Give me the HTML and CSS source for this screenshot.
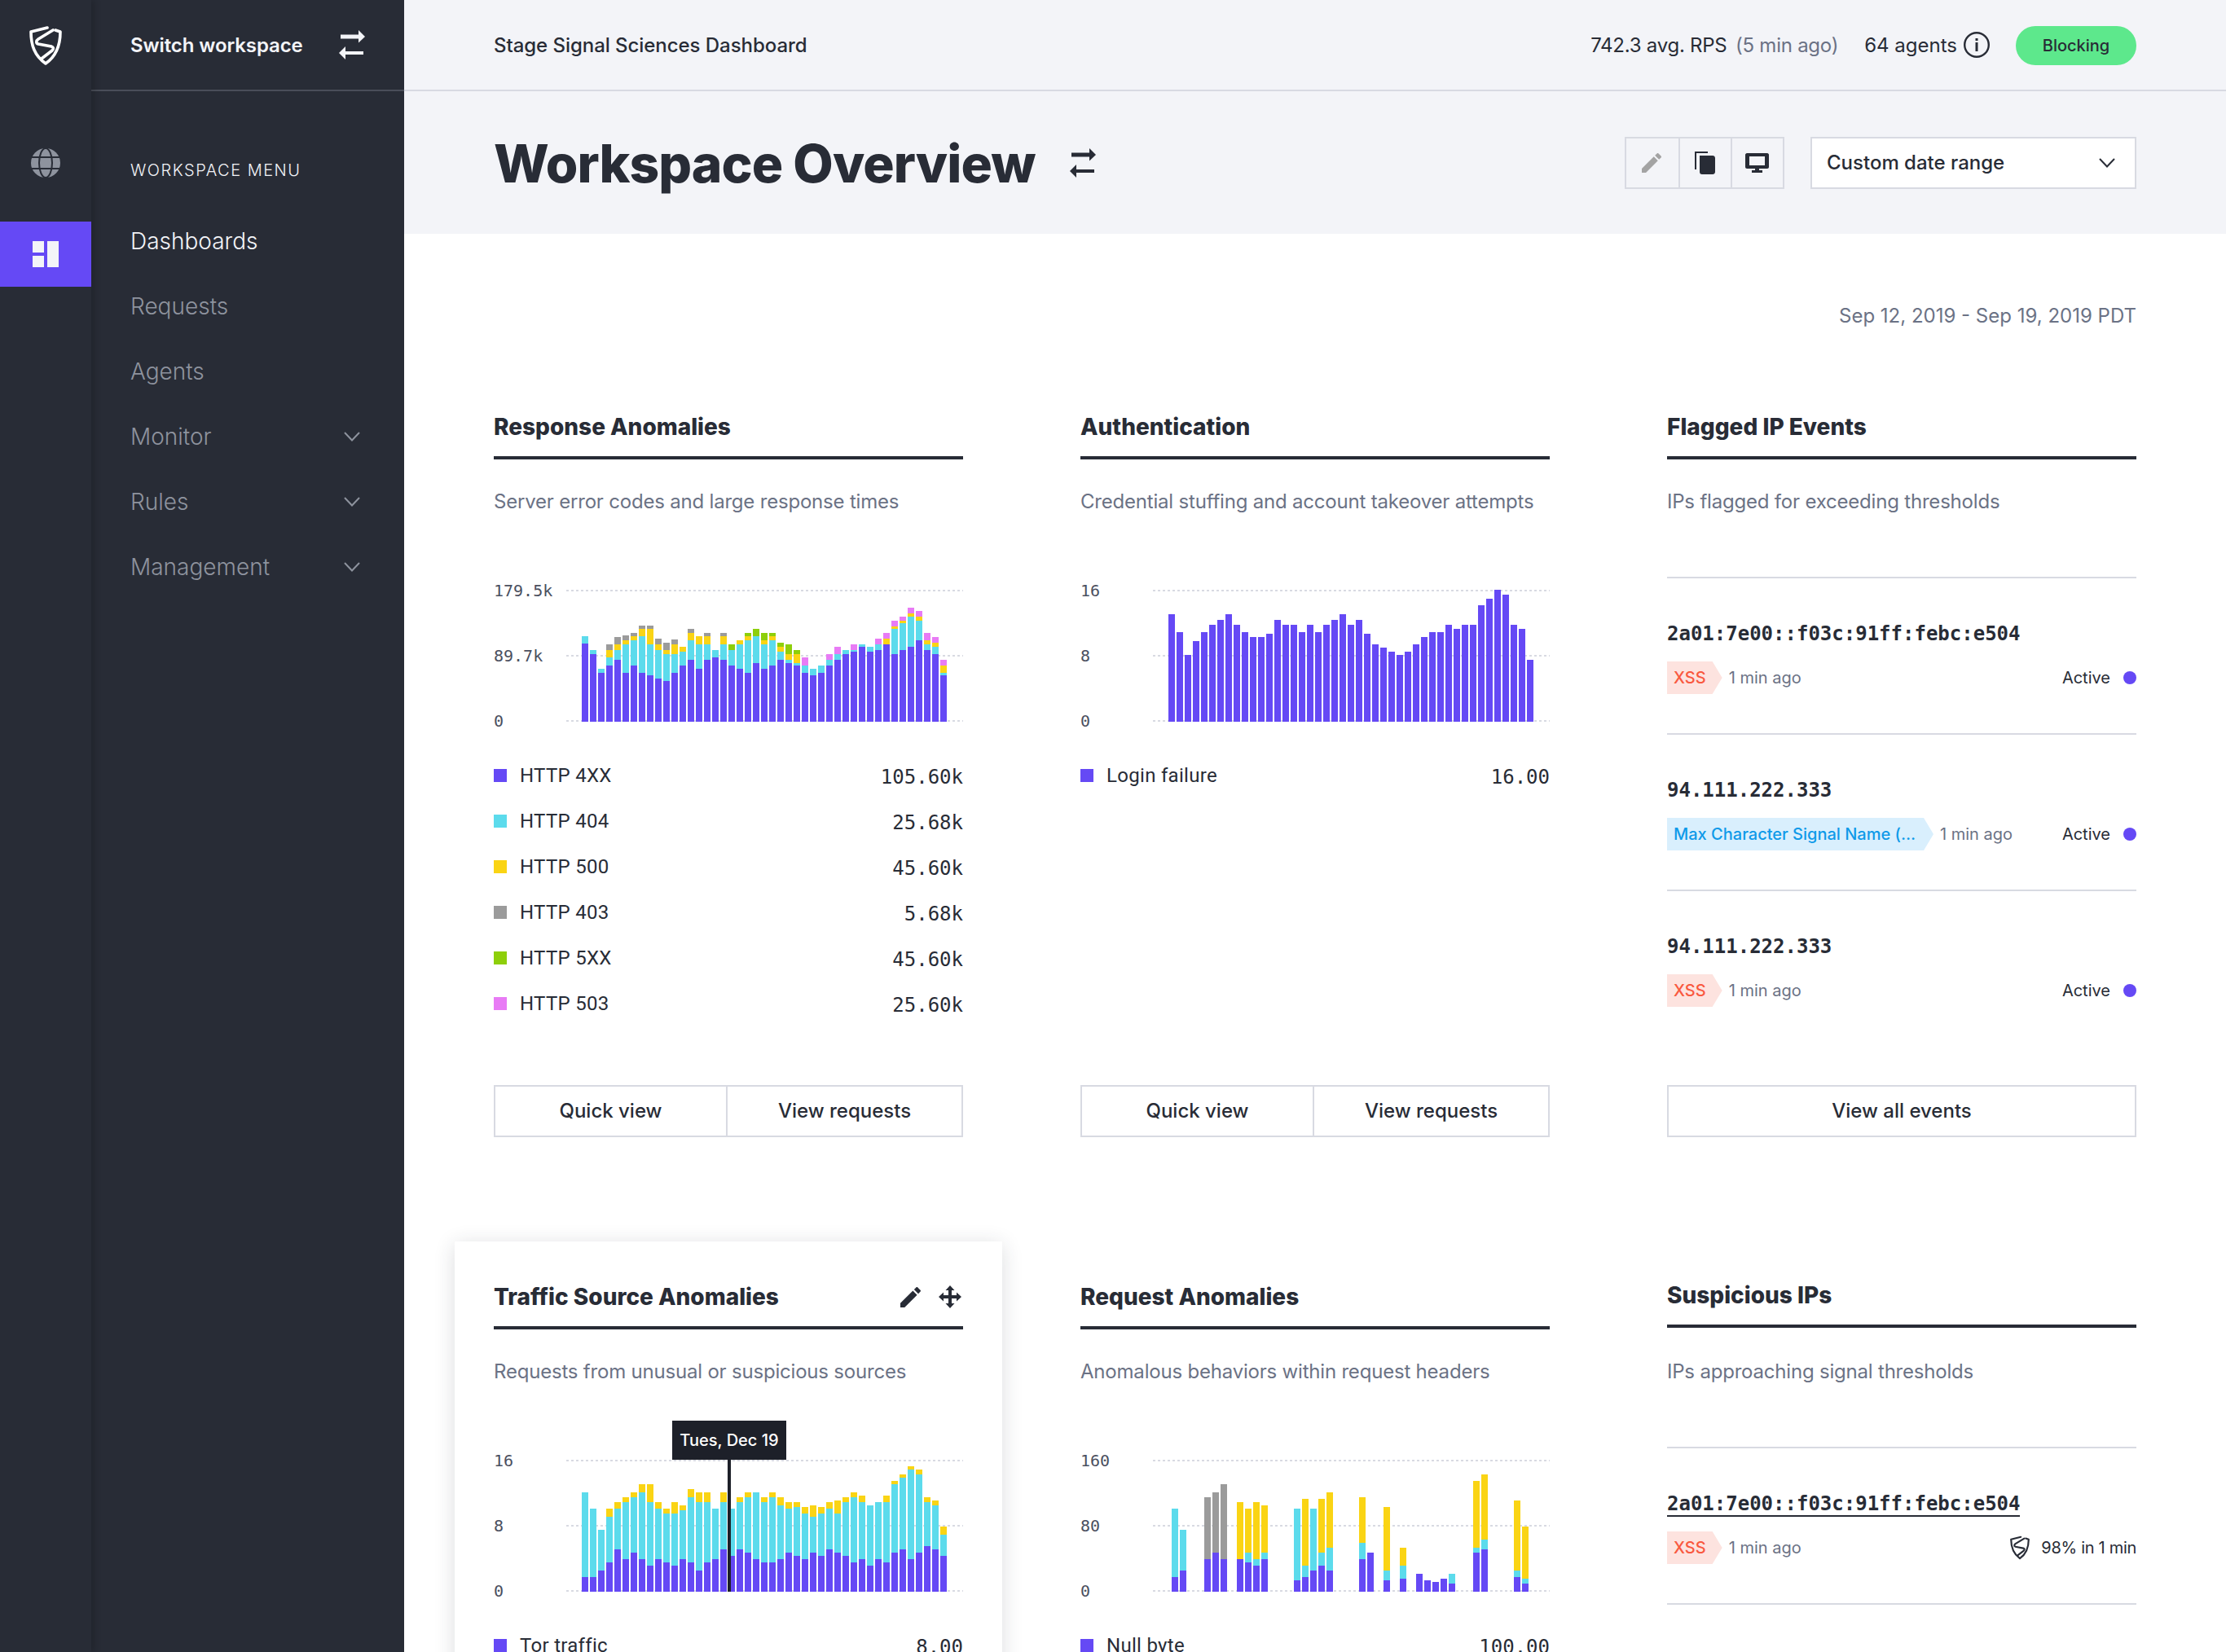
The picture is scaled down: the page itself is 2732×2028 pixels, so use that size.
FILE: index.html
```html
<!DOCTYPE html>
<html lang="en">
<head>
  <meta charset="UTF-8">
  <title>Workspace Overview - Signal Sciences</title>
  <link rel="stylesheet" href="styles.css">
</head>
<body>

<svg class="defs" width="0" height="0">
  <symbol id="i-logo" viewBox="0 0 40 48">
    <g fill="none" stroke="currentColor" stroke-width="3.600" stroke-linejoin="round" stroke-linecap="round">
      <path d="M22 2 L2 7 C2 23 6 36 20 46 C33 37 38 23 38 7 L32 5"/>
      <path d="M29 5 L11 16 C8 18 8 21 11 22 L27 25 C30 26 30 28 28 30 L15 40"/>
    </g>
  </symbol>
  <symbol id="i-swap" viewBox="0 0 32 36">
    <path fill="currentColor" d="M2 5.500h22V0l8 8-8 7.500v-5H2zM30 26H8v-6l-8 8 8 8v-6h22z"/>
  </symbol>
  <symbol id="i-pencil" viewBox="3 3 18 18">
    <path fill="currentColor" d="M3 17.250V21h3.750L17.810 9.940l-3.750-3.750L3 17.250zM20.710 7.040c.39-.39.39-1.020 0-1.410l-2.340-2.340c-.39-.39-1.020-.39-1.410 0l-1.830 1.830 3.750 3.750 1.830-1.830z"/>
  </symbol>
  <symbol id="i-chevron" viewBox="0 0 20 12">
    <path fill="none" stroke="currentColor" stroke-width="2" d="M1 1l9 9.500L19 1"/>
  </symbol>
</svg>

<div class="app">

  <nav class="rail">
    <div class="rail-logo"><svg class="logo"><use href="#i-logo"/></svg></div>
    <div class="rail-item">
      <svg class="globe" viewBox="0 0 36 36">
        <circle cx="18" cy="18" r="18" fill="#8e939e"/>
        <g fill="none" stroke="#282c36" stroke-width="2">
          <ellipse cx="18" cy="18" rx="8" ry="18"/>
          <path d="M0 11h36M0 25h36"/>
        </g>
      </svg>
    </div>
    <div class="rail-item active">
      <svg class="grid-icon" viewBox="0 0 32 32">
        <path fill="#f3f4f8" d="M0 0h14v14H0zM0 18h14v14H0zM18 0h14v32H18z"/>
      </svg>
    </div>
  </nav>

  <aside class="sidebar">
    <div class="switcher">
      <span>Switch workspace</span>
      <svg class="swap"><use href="#i-swap"/></svg>
    </div>
    <div class="menu-title">WORKSPACE MENU</div>
    <a class="menu-item current">Dashboards</a>
    <a class="menu-item">Requests</a>
    <a class="menu-item">Agents</a>
    <a class="menu-item">Monitor <svg class="chev"><use href="#i-chevron"/></svg></a>
    <a class="menu-item">Rules <svg class="chev"><use href="#i-chevron"/></svg></a>
    <a class="menu-item">Management <svg class="chev"><use href="#i-chevron"/></svg></a>
  </aside>

  <main class="main">
    <div class="topbar">
      <div class="crumb">Stage Signal Sciences Dashboard</div>
      <div class="stats">
        <div class="rps">742.3 avg. RPS <span class="muted">(5 min ago)</span></div>
        <div class="agents">64 agents
          <svg class="info" viewBox="0 0 32 32">
            <circle cx="16" cy="16" r="14.800" fill="none" stroke="currentColor" stroke-width="2.400"/>
            <path fill="currentColor" d="M14.500 13h3v11h-3zM14.500 8h3v3h-3z"/>
          </svg>
        </div>
        <div class="pill">Blocking</div>
      </div>
    </div>

    <header class="pagehead">
      <div class="pagetitle">
        <h1>Workspace Overview</h1>
        <svg class="swap"><use href="#i-swap"/></svg>
      </div>
      <div class="tools">
        <div class="toolgroup">
          <div class="tool"><svg class="tool-pencil"><use href="#i-pencil"/></svg></div>
          <div class="tool">
            <svg class="tool-copy" viewBox="0 0 25 28"><path fill="currentColor" d="M0 0h16v2H2v20H0zM6 5h16c1.500 0 3 1 3 3v17c0 2-1.500 3-3 3H9c-2 0-3-1-3-3z"/></svg>
          </div>
          <div class="tool">
            <svg class="tool-screen" viewBox="0 0 29 24"><path fill="currentColor" fill-rule="evenodd" d="M2 0h25c1 0 2 1 2 2v15c0 1-1 2-2 2H17v2h4v3H8v-3h4v-2H2c-1 0-2-1-2-2V2C0 1 1 0 2 0zM5 4v11h19V4z"/></svg>
          </div>
        </div>
        <div class="select">
          <span>Custom date range</span>
          <svg class="chev"><use href="#i-chevron"/></svg>
        </div>
      </div>
    </header>

    <section class="content">
      <div class="daterange">Sep 12, 2019 - Sep 19, 2019 PDT</div>

      <div class="cards">

        <article class="card">
          <h3 class="card-head">Response Anomalies</h3>
          <p class="card-sub">Server error codes and large response times</p>
          <div class="chart" data-chart="response" data-labels="179.5k,89.7k,0"></div>
          <ul class="legend">
            <li><i class="sw p"></i><span>HTTP 4XX</span><b>105.60k</b></li>
            <li><i class="sw c"></i><span>HTTP 404</span><b>25.68k</b></li>
            <li><i class="sw y"></i><span>HTTP 500</span><b>45.60k</b></li>
            <li><i class="sw g"></i><span>HTTP 403</span><b>5.68k</b></li>
            <li><i class="sw l"></i><span>HTTP 5XX</span><b>45.60k</b></li>
            <li><i class="sw m"></i><span>HTTP 503</span><b>25.60k</b></li>
          </ul>
          <div class="actions"><button>Quick view</button><button>View requests</button></div>
        </article>

        <article class="card">
          <h3 class="card-head">Authentication</h3>
          <p class="card-sub">Credential stuffing and account takeover attempts</p>
          <div class="chart" data-chart="auth" data-labels="16,8,0"></div>
          <ul class="legend">
            <li><i class="sw p"></i><span>Login failure</span><b>16.00</b></li>
          </ul>
          <div class="actions"><button>Quick view</button><button>View requests</button></div>
        </article>

        <article class="card">
          <h3 class="card-head">Flagged IP Events</h3>
          <p class="card-sub">IPs flagged for exceeding thresholds</p>
          <div class="events">
            <div class="event">
              <div class="ip">2a01:7e00::f03c:91ff:febc:e504</div>
              <div class="event-meta">
                <span class="tag red">XSS</span><span class="ago">1 min ago</span>
                <span class="status">Active <i class="dot"></i></span>
              </div>
            </div>
            <div class="event">
              <div class="ip">94.111.222.333</div>
              <div class="event-meta">
                <span class="tag blue">Max Character Signal Name (...</span><span class="ago">1 min ago</span>
                <span class="status">Active <i class="dot"></i></span>
              </div>
            </div>
            <div class="event">
              <div class="ip">94.111.222.333</div>
              <div class="event-meta">
                <span class="tag red">XSS</span><span class="ago">1 min ago</span>
                <span class="status">Active <i class="dot"></i></span>
              </div>
            </div>
          </div>
          <div class="actions"><button>View all events</button></div>
        </article>

        <article class="card raised">
          <h3 class="card-head">Traffic Source Anomalies
            <span class="head-tools">
              <svg class="head-pencil"><use href="#i-pencil"/></svg>
              <svg class="head-move" viewBox="0 0 28 28"><path fill="currentColor" d="M14 0l5.500 6H16v6h6V8.500l6 5.500-6 5.500V16h-6v6h3.500L14 28l-5.500-6H12v-6H6v3.500L0 14l6-5.500V12h6V6H8.500z"/></svg>
            </span>
          </h3>
          <p class="card-sub">Requests from unusual or suspicious sources</p>
          <div class="chart" data-chart="traffic" data-labels="16,8,0">
            <div class="tip">Tues, Dec 19</div>
            <div class="tip-line"></div>
          </div>
          <ul class="legend">
            <li><i class="sw p"></i><span>Tor traffic</span><b>8.00</b></li>
          </ul>
        </article>

        <article class="card">
          <h3 class="card-head">Request Anomalies</h3>
          <p class="card-sub">Anomalous behaviors within request headers</p>
          <div class="chart shifted" data-chart="request" data-labels="160,80,0"></div>
          <ul class="legend">
            <li><i class="sw p"></i><span>Null byte</span><b>100.00</b></li>
          </ul>
        </article>

        <article class="card lifted">
          <h3 class="card-head">Suspicious IPs</h3>
          <p class="card-sub">IPs approaching signal thresholds</p>
          <div class="events">
            <div class="event">
              <div class="ip"><u>2a01:7e00::f03c:91ff:febc:e504</u></div>
              <div class="event-meta">
                <span class="tag red">XSS</span><span class="ago">1 min ago</span>
                <span class="status score"><svg class="shield"><use href="#i-logo"/></svg> 98% in 1 min</span>
              </div>
            </div>
            <div class="event"></div>
          </div>
        </article>

      </div>
    </section>
  </main>
</div>

<script>
// p purple, c cyan, y yellow, g gray, l lime, m magenta
// each bar lists where every segment ends, measured from the top of the chart image
const CHARTS = {
  response: { base: 588, bars: [
    "p300 c272","p338 c324","p407 c392","p381 c350 y324 g302","p360 c324 y303 g277","p407 c303 y288 g271",
    "p381 c288 y273 g262","p407 c272 y246 g235","p417 c303 y246 g235","p428 c324 y303 g282","p438 c339 y324 g297",
    "p407 c339 y303 g286","p381 c329 y313","p360 c288 y262 g246","p392 c303 y273","p360 c303 y273 g262","p350 c324",
    "p360 c303 y273 g262","p381 c324 l303","p392 c303 y288","p407 c288 y273 l262","p371 c273 l246","p392 c303 y288 l262",
    "p381 c288 y273 l262","p360 c329 y313 l298","p371 c360 y339 l303","p381 c371 y339 l324","p407 c381 m350","p417 c392",
    "p407 c381","p381 c360 m339","p360 c339 m313","p339 c324","p329 c324 m303","p313 c303","p329 c313","p324 c303 m282",
    "p303 y282 m262","p339 c246 y236 m215","p324 c226 y215 m200","p313 c200 y189 m168","p288 c215 y200 m179",
    "p324 c303 y288 m262","p339 c313 y298 m277","p417 c407 y381 m360"
  ]},
  auth: { base: 588, bars: [
    "p192","p258","p342","p290","p258","p232","p212","p192","p232","p258","p277","p277","p264","p212","p232","p232",
    "p258","p232","p258","p232","p212","p192","p232","p212","p264","p303","p316","p329","p342","p329","p303","p277",
    "p258","p258","p232","p245","p232","p232","p160","p134","p102","p121","p232","p245","p361"
  ]},
  traffic: { base: 1302, bars: [
    "p1248 c936","p1248 c996","p1224 c1074","p1194 c1026 y996","p1146 c996 y972","p1182 c972 y954","p1158 c954 y936",
    "p1182 c936 y906","p1206 c972 y906","p1182 c996 y972","p1194 c1014 y996","p1206 c1014 y972","p1182 c1002 y984",
    "p1194 c954 y924","p1224 c972 y936","p1194 c972 y936","p1182 c996","p1146 c972 y936","p1170 c996","p1146 c972 y954",
    "p1158 c954 y936","p1182 c936","p1194 c972 y954","p1194 c954 y936","p1182 c984 y954","p1158 c996 y972",
    "p1170 c990 y972","p1182 c1014 y990","p1158 c1026 y984","p1170 c1014 y990","p1146 c996 y972","p1158 c1014 y966",
    "p1170 c972 y954","p1194 c954 y936","p1182 c972 y948","p1206 c984","p1182 c972","p1194 c972 y948","p1158 c906 y894",
    "p1146 c882 y870","p1182 c852 y840","p1158 c870 y852","p1134 c972 y954","p1146 c984 y966","p1170 c1092 y1062"
  ]},
  request: { base: 642, bars: [
    "p588 c336","p564 c414","","","p522 g294","p498 g276","p522 g246","","p522 y312","p534 c498 y336","p546 c522 y312",
    "p522 c498 y324","","","","p600 c336","p588 c546 y300","p564 c336","p546 c498 y300","p564 c480 y276","","","",
    "p522 c462 y294","p498","","p600 c564 y330","","p594 c546 y480","","p576","p600","p606","p594","p612 c576","","",
    "p498 c480 y234","p486 c450 y210","","","","p588 c564 y306","p612 c594 y402"
  ]}
};

function dibujarBarra(texto, base) {
  const barra = document.createElement("div");
  barra.className = "bar";
  let anterior = base;
  texto.split(" ").filter(Boolean).forEach(function (parte) {
    const fin = Number(parte.slice(1));
    const seg = document.createElement("i");
    seg.className = parte[0];
    seg.style.height = (anterior - fin) / 3 + "px";
    barra.appendChild(seg);
    anterior = fin;
  });
  return barra;
}

document.querySelectorAll(".chart").forEach(function (chart) {
  const datos = CHARTS[chart.dataset.chart];
  const filas = chart.dataset.labels.split(",").map(function (etiqueta) {
    const fila = document.createElement("div");
    fila.className = "gridrow";
    fila.innerHTML = "<span>" + etiqueta + "</span><hr>";
    return fila;
  });
  chart.prepend(...filas);

  const barras = document.createElement("div");
  barras.className = "bars";
  datos.bars.forEach(function (texto) {
    barras.appendChild(dibujarBarra(texto, datos.base));
  });
  chart.insertBefore(barras, filas[2].nextSibling);
});
</script>

</body>
</html>
```

FILE: styles.css
```css
* { box-sizing: border-box; }
html, body { margin: 0; height: 100%; }
body {
  font-family: Inter, "Noto Sans", sans-serif;
  color: #282c36;
  background: #fff;
  overflow: hidden;
}
.defs { position: absolute; }
h1, h3, p, ul { margin: 0; padding: 0; }
.app { display: flex; height: 2028px; overflow: hidden; }

/* icon rail */
.rail {
  width: 112px;
  flex: none;
  background: #282c36;
  color: #fff;
  box-shadow: 4px 0 8px rgba(0, 0, 0, .18);
  position: relative;
  z-index: 1;
  display: flex;
  flex-direction: column;
  gap: 32px;
}
.rail-logo { height: 128px; padding-top: 32px; display: flex; justify-content: center; }
.logo { width: 40px; height: 48px; }
.rail-item { height: 80px; display: flex; align-items: center; justify-content: center; }
.rail-item.active { background: #6549f5; }
.globe { width: 36px; height: 36px; }
.grid-icon { width: 32px; height: 32px; }

/* sidebar */
.sidebar { width: 384px; flex: none; background: #282c36; color: #8e939e; }
.switcher {
  height: 112px;
  padding: 0 48px 0 48px;
  border-bottom: 2px solid #4a4e59;
  display: flex;
  align-items: center;
  justify-content: space-between;
  color: #f3f4f8;
  font-size: 24px;
  font-weight: 600;
  letter-spacing: -.1px;
}
.swap { width: 32px; height: 36px; flex: none; }
.menu-title {
  margin: 83px 0 33px 48px;
  height: 28px;
  line-height: 28px;
  font-size: 20px;
  font-weight: 300;
  letter-spacing: 1.500px;
  color: #f3f4f8;
}
.menu-item {
  height: 80px;
  padding: 0 54px 0 48px;
  display: flex;
  align-items: center;
  justify-content: space-between;
  font-size: 28px;
  font-weight: 300;
}
.menu-item.current { color: #f3f4f8; }
.chev { width: 20px; height: 12px; flex: none; }

/* main column */
.main { flex: 1; min-width: 0; }
.topbar {
  height: 112px;
  padding: 0 110px;
  background: #f3f4f8;
  border-bottom: 2px solid #d8dae2;
  display: flex;
  align-items: center;
  justify-content: space-between;
  font-size: 24px;
}
.crumb { font-weight: 500; letter-spacing: -.05px; }
.stats { display: flex; align-items: center; }
.rps { margin-right: 32px; letter-spacing: -.25px; }
.muted { color: #6b7285; margin-left: 4px; }
.agents { display: flex; align-items: center; gap: 8px; margin-right: 32px; }
.info { width: 32px; height: 32px; }
.pill {
  width: 148px;
  height: 48px;
  margin-top: 2px;
  border-radius: 24px;
  background: #5de88c;
  font-size: 20px;
  font-weight: 500;
  display: flex;
  align-items: center;
  justify-content: center;
}

.pagehead {
  height: 175px;
  padding: 0 110px;
  background: #f3f4f8;
  display: flex;
  align-items: center;
  justify-content: space-between;
}
.pagetitle { display: flex; align-items: center; gap: 42px; }
.pagetitle h1 { font-size: 64px; font-weight: 800; letter-spacing: -.9px; padding-top: 2px; }
.tools { display: flex; gap: 32px; }
.toolgroup { display: flex; border: 2px solid #d8dae2; height: 64px; }
.tool { width: 64px; padding-right: 2px; display: flex; align-items: center; justify-content: center; }
.tool + .tool { border-left: 2px solid #d8dae2; }
.tool-pencil { width: 24px; height: 24px; color: #a3a3a3; }
.tool-copy { width: 25px; height: 28px; }
.tool-screen { width: 29px; height: 24px; }
.select {
  width: 400px;
  height: 64px;
  padding: 0 24px 0 18px;
  background: #fff;
  border: 2px solid #d8dae2;
  display: flex;
  align-items: center;
  justify-content: space-between;
  font-size: 24px;
  font-weight: 500;
}

/* cards */
.content { padding: 85px 110px 0; }
.daterange { height: 32px; line-height: 32px; text-align: right; font-size: 24px; color: #6b7285; }
.cards {
  margin-top: 100px;
  display: grid;
  grid-template-columns: repeat(3, 576px);
  grid-auto-rows: 892px;
  column-gap: 144px;
  row-gap: 176px;
}
.card { display: flex; flex-direction: column; }
.card.raised {
  margin: -48px -48px 0;
  padding: 48px 48px 0;
  background: #fff;
  box-shadow: 0 4px 24px rgba(40, 44, 54, .16);
  height: 940px;
}
.card.lifted .card-head { margin-top: -2px; }
.card.lifted .card-sub { margin-top: 38px; }
.card-head {
  height: 60px;
  line-height: 40px;
  padding-bottom: 16px;
  border-bottom: 4px solid #282c36;
  font-size: 28px;
  font-weight: 800;
  display: flex;
  justify-content: space-between;
}
.head-tools { display: flex; align-items: center; gap: 22px; }
.head-pencil { width: 25px; height: 25px; }
.head-move { width: 28px; height: 28px; margin-right: 2px; }
.card-sub { margin-top: 36px; height: 32px; line-height: 32px; font-size: 24px; color: #6b7285; letter-spacing: -.2px; }

/* charts */
.chart { position: relative; margin-top: 81px; height: 184px; display: flex; flex-direction: column; gap: 56px; }
.gridrow { height: 24px; display: flex; align-items: center; font-family: "DejaVu Sans Mono", monospace; font-size: 20px; color: #4b5060; }
.gridrow span { width: 89px; flex: none; }
.gridrow hr {
  flex: 1;
  height: 2px;
  margin: 0;
  border: 0;
  background: repeating-linear-gradient(90deg, #d8dae2 0 3px, transparent 3px 6px);
}
.bars { position: absolute; left: 108px; bottom: 11px; display: flex; align-items: flex-end; gap: 2px; }
.chart.shifted .bars { left: 112px; }
.bar { width: 8px; display: flex; flex-direction: column-reverse; }
.bar i { display: block; }
.p { background: #6549f5; }
.c { background: #5cdbec; }
.y { background: #fad414; }
.g { background: #9b9b9b; }
.l { background: #8ecf0a; }
.m { background: #e87bf5; }
.tip {
  position: absolute;
  left: 219px;
  top: -37px;
  width: 140px;
  height: 48px;
  background: #1d2029;
  color: #fff;
  font-size: 20px;
  font-weight: 500;
  display: flex;
  align-items: center;
  justify-content: center;
  z-index: 2;
}
.tip-line { position: absolute; left: 287px; top: 11px; bottom: 11px; width: 4px; background: #1d2029; z-index: 2; }

.legend { margin-top: 27px; list-style: none; }
.legend li { height: 56px; display: flex; align-items: center; font-family: Roboto, sans-serif; font-size: 24px; letter-spacing: .3px; }
.sw { width: 16px; height: 16px; margin-right: 16px; }
.legend b { margin-left: auto; padding-top: 3px; font-family: "DejaVu Sans Mono", monospace; font-weight: 400; letter-spacing: 0; }

.actions { margin-top: auto; height: 64px; display: flex; border: 2px solid #d8dae2; }
button {
  flex: 1;
  padding: 0 0 2px;
  background: #fff;
  border: none;
  font: 500 24px Inter, sans-serif;
  color: #282c36;
}
button:first-child:not(:last-child) { flex: none; width: 283px; }
button + button { border-left: 2px solid #d8dae2; }

/* ip lists */
.events { margin-top: 76px; }
.event { height: 192px; padding-top: 52px; border-top: 2px solid #d8dae2; }
.event:nth-child(3) { height: 120px; }
.ip { height: 32px; line-height: 32px; font-family: "DejaVu Sans Mono", monospace; font-size: 24px; font-weight: 700; }
.ip u { text-decoration: none; border-bottom: 2px solid #282c36; }
.event-meta { margin-top: 18px; height: 40px; display: flex; align-items: center; font-size: 20px; }
.tag {
  height: 40px;
  padding: 0 20px 0 8px;
  display: flex;
  align-items: center;
  font-weight: 500;
  clip-path: polygon(0 0, calc(100% - 12px) 0, 100% 50%, calc(100% - 12px) 100%, 0 100%);
}
.tag.red { background: #fde3df; color: #f9593f; }
.tag.blue { background: #d9effd; color: #0f9ae9; width: 327px; white-space: nowrap; }
.ago { margin-left: 8px; color: #6b7285; }
.status { margin-left: auto; display: flex; align-items: center; gap: 16px; }
.status.score { letter-spacing: -.3px; }
.dot { width: 16px; height: 16px; border-radius: 50%; background: #6549f5; }
.shield { width: 24px; height: 30px; margin-right: -2px; }
```
